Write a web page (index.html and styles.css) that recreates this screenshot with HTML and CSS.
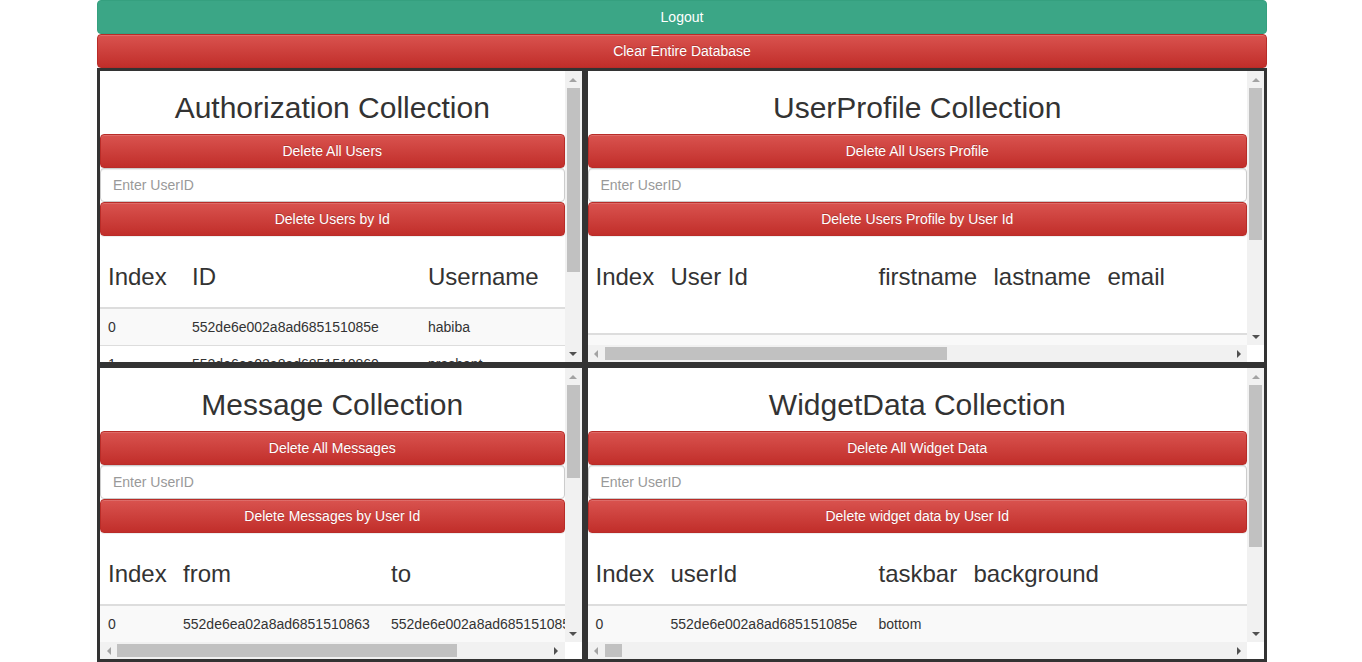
FILE: index.html
```html
<!DOCTYPE html>
<html>
<head>
<meta charset="utf-8">
<title>Admin</title>
<link rel="stylesheet" href="styles.css">
</head>
<body>
<div class="container">
  <button class="btn btn-logout">Logout</button>
  <button class="btn btn-danger">Clear Entire Database</button>
  <div class="grid">
    <!-- Authorization -->
    <section class="panel panel-v">
      <div class="content">
        <h2>Authorization Collection</h2>
        <button class="btn btn-danger">Delete All Users</button>
        <input class="form-control" placeholder="Enter UserID">
        <button class="btn btn-danger">Delete Users by Id</button>
        <table class="tbl tbl-auth">
          <colgroup><col class="c-idx"><col class="c-id"><col></colgroup>
          <thead><tr><th>Index</th><th>ID</th><th>Username</th></tr></thead>
          <tbody>
            <tr><td>0</td><td>552de6e002a8ad685151085e</td><td>habiba</td></tr>
            <tr><td>1</td><td>552de6ea02a8ad6851510860</td><td>prashant</td></tr>
          </tbody>
        </table>
      </div>
      <div class="vbar">
        <span class="arr arr-up off"></span>
        <span class="vtrack"><span class="vthumb" style="height:184px"></span></span>
        <span class="arr arr-down"></span>
      </div>
    </section>

    <!-- UserProfile -->
    <section class="panel panel-vh">
      <div class="content">
        <h2>UserProfile Collection</h2>
        <button class="btn btn-danger">Delete All Users Profile</button>
        <input class="form-control" placeholder="Enter UserID">
        <button class="btn btn-danger">Delete Users Profile by User Id</button>
        <table class="tbl tbl-profile">
          <colgroup><col class="c-idx2"><col class="c-uid"><col class="c-first"><col class="c-last"><col></colgroup>
          <thead><tr class="tall"><th>Index</th><th>User Id</th><th>firstname</th><th>lastname</th><th>email</th></tr></thead>
          <tbody>
            <tr><td>&nbsp;</td><td></td><td></td><td></td><td></td></tr>
          </tbody>
        </table>
      </div>
      <div class="vbar">
        <span class="arr arr-up off"></span>
        <span class="vtrack"><span class="vthumb" style="height:152px"></span></span>
        <span class="arr arr-down"></span>
      </div>
      <div class="hbar">
        <span class="arr arr-left off"></span>
        <span class="htrack"><span class="hthumb" style="width:342px"></span></span>
        <span class="arr arr-right"></span>
      </div>
      <div class="corner"></div>
    </section>

    <!-- Message -->
    <section class="panel panel-vh">
      <div class="content">
        <h2>Message Collection</h2>
        <button class="btn btn-danger">Delete All Messages</button>
        <input class="form-control" placeholder="Enter UserID">
        <button class="btn btn-danger">Delete Messages by User Id</button>
        <table class="tbl tbl-msg">
          <colgroup><col class="c-idx2"><col class="c-uid"><col></colgroup>
          <thead><tr><th>Index</th><th>from</th><th>to</th></tr></thead>
          <tbody>
            <tr><td>0</td><td>552de6ea02a8ad6851510863</td><td>552de6e002a8ad685151085e</td></tr>
          </tbody>
        </table>
      </div>
      <div class="vbar">
        <span class="arr arr-up off"></span>
        <span class="vtrack"><span class="vthumb" style="height:93px"></span></span>
        <span class="arr arr-down"></span>
      </div>
      <div class="hbar">
        <span class="arr arr-left off"></span>
        <span class="htrack"><span class="hthumb" style="width:340px"></span></span>
        <span class="arr arr-right"></span>
      </div>
      <div class="corner"></div>
    </section>

    <!-- WidgetData -->
    <section class="panel panel-vh">
      <div class="content">
        <h2>WidgetData Collection</h2>
        <button class="btn btn-danger">Delete All Widget Data</button>
        <input class="form-control" placeholder="Enter UserID">
        <button class="btn btn-danger">Delete widget data by User Id</button>
        <table class="tbl tbl-widget">
          <colgroup><col class="c-idx2"><col class="c-uid"><col class="c-task"><col></colgroup>
          <thead><tr><th>Index</th><th>userId</th><th>taskbar</th><th>background</th></tr></thead>
          <tbody>
            <tr><td>0</td><td>552de6e002a8ad685151085e</td><td>bottom</td><td></td></tr>
          </tbody>
        </table>
      </div>
      <div class="vbar">
        <span class="arr arr-up off"></span>
        <span class="vtrack"><span class="vthumb" style="height:162px"></span></span>
        <span class="arr arr-down"></span>
      </div>
      <div class="hbar">
        <span class="arr arr-left off"></span>
        <span class="htrack"><span class="hthumb" style="width:17px"></span></span>
        <span class="arr arr-right"></span>
      </div>
      <div class="corner"></div>
    </section>
  </div>
</div>
</body>
</html>
```
FILE: styles.css
```css
* { box-sizing: border-box; }
html, body { margin: 0; padding: 0; background: #fff; }
body {
  font-family: "Liberation Sans", Arial, Helvetica, sans-serif;
  font-size: 14px;
  line-height: 20px;
  color: #333;
  overflow: hidden;
}
.container { width: 1170px; margin: 0 0 0 calc(50% - 584px); }

.btn {
  display: block;
  width: 100%;
  height: 34px;
  padding: 6px 12px;
  margin: 0;
  font-family: inherit;
  font-size: 14px;
  line-height: 20px;
  color: #fff;
  text-align: center;
  border: 1px solid transparent;
  border-radius: 4px;
  cursor: pointer;
}
.btn-logout {
  background: #3ba686;
  border-color: #35a07f;
}
.btn-danger {
  background-image: linear-gradient(to bottom, #d9534f 0, #c12e2a 100%);
  border-color: #b92c28;
  box-shadow: inset 0 1px 0 rgba(255,255,255,.15), 0 1px 1px rgba(0,0,0,.075);
  text-shadow: 0 -1px 0 rgba(0,0,0,.2);
}

.form-control {
  display: block;
  width: 100%;
  height: 34px;
  padding: 6px 12px;
  margin: 0;
  font-family: inherit;
  font-size: 14px;
  line-height: 20px;
  color: #555;
  background: #fff;
  border: 1px solid #ccc;
  border-radius: 4px;
  box-shadow: inset 0 1px 1px rgba(0,0,0,.075);
}
.form-control::placeholder { color: #999; }

.grid {
  display: grid;
  grid-template-columns: 487.5px 682.5px;
  grid-auto-rows: 297px;
}

.panel {
  border: 3px solid #333;
  display: grid;
  min-width: 0;
  min-height: 0;
  overflow: hidden;
}
.panel-v { grid-template-columns: minmax(0,1fr) 17px; grid-template-rows: minmax(0,1fr); }
.panel-vh { grid-template-columns: minmax(0,1fr) 17px; grid-template-rows: minmax(0,1fr) 17px; }

.content { overflow: hidden; min-width: 0; min-height: 0; }

h2 {
  margin: 20px 0 10px;
  font-size: 30px;
  line-height: 33px;
  font-weight: 500;
  text-align: center;
  color: #333;
  white-space: nowrap;
}

/* tables */
.tbl {
  border-collapse: collapse;
  border-spacing: 0;
  table-layout: fixed;
  margin-top: 0;
}
.tbl th {
  text-align: left;
  font-size: 24px;
  line-height: 26px;
  font-weight: 500;
  padding: 28px 8px 17px;
  border-bottom: 2px solid #ddd;
  white-space: nowrap;
  vertical-align: top;
}
.tbl .tall th { padding-bottom: 43px; }
.tbl td {
  padding: 8px;
  line-height: 20px;
  border-top: 1px solid #ddd;
  white-space: nowrap;
  overflow: hidden;
  vertical-align: top;
}
.tbl tbody tr:nth-child(odd) td { background: #f9f9f9; }

.tbl-auth { width: 100%; }
.tbl-auth .c-idx { width: 84px; }
.tbl-auth .c-id { width: 236px; }

.c-idx2 { width: 75px; }
.c-uid { width: 208px; }
.c-first { width: 115px; }
.c-last { width: 114px; }
.c-task { width: 95px; }

.tbl-profile { width: 1205px; }
.tbl-msg { width: 591px; }
.tbl-widget { width: 3000px; }

/* fake scrollbars */
.vbar {
  display: flex;
  flex-direction: column;
  background: #f1f1f1;
  min-height: 0;
}
.hbar {
  display: flex;
  flex-direction: row;
  background: #f1f1f1;
  min-width: 0;
}
.corner { background: #fff; }
.arr {
  flex: 0 0 17px;
  width: 17px;
  height: 17px;
  display: flex;
  align-items: center;
  justify-content: center;
}
.arr::before {
  content: "";
  width: 0;
  height: 0;
  border: 4px solid transparent;
}
.arr-up::before { border-bottom-color: #505050; border-top-width: 0; }
.arr-down::before { border-top-color: #505050; border-bottom-width: 0; }
.arr-left::before { border-right-color: #505050; border-left-width: 0; }
.arr-right::before { border-left-color: #505050; border-right-width: 0; }
.arr-up.off::before { border-bottom-color: #a3a3a3; }
.arr-left.off::before { border-right-color: #a3a3a3; }

.vtrack { flex: 1 1 auto; display: flex; flex-direction: column; padding: 0 2px; min-height: 0; }
.vthumb { display: block; background: #c1c1c1; width: 100%; }
.htrack { flex: 1 1 auto; display: flex; flex-direction: row; padding: 2px 0; min-width: 0; }
.hthumb { display: block; background: #c1c1c1; height: 100%; }
```
